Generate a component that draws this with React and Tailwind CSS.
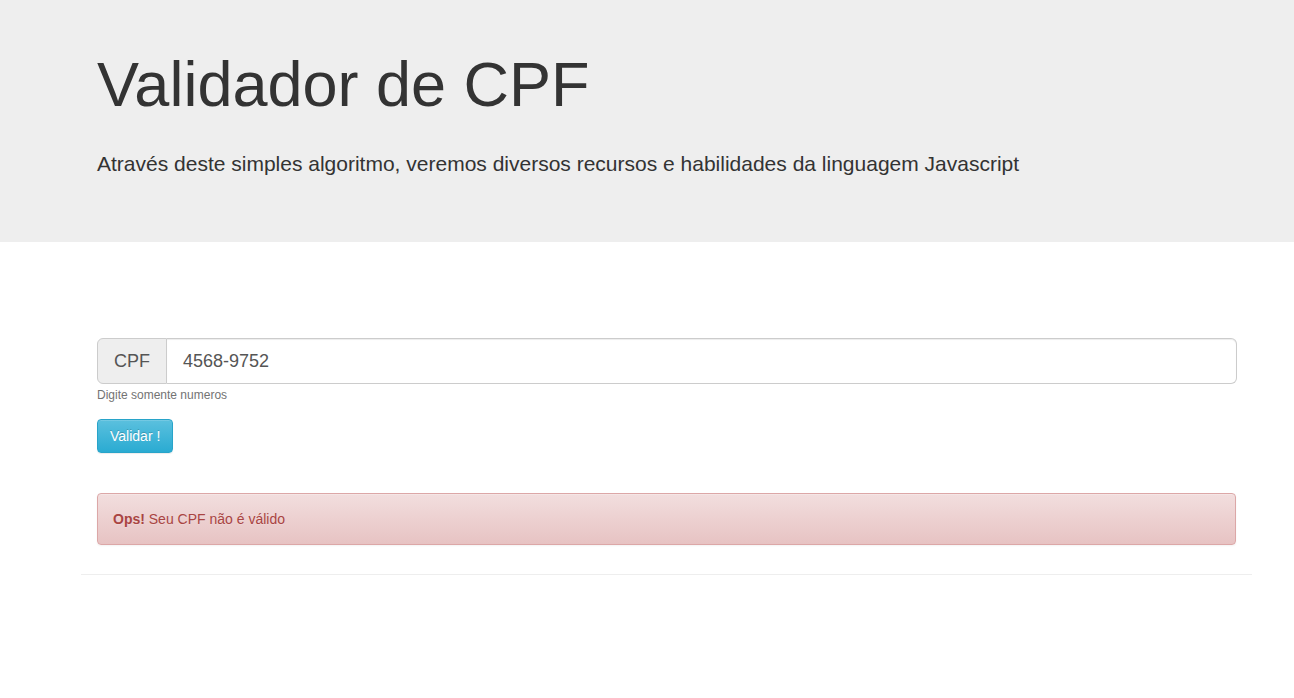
export default function App() {
  const font = { fontFamily: '"Liberation Sans", Arial, Helvetica, sans-serif' };
  return (
    <div style={font} className="min-h-[698px] bg-white text-[#333] text-[14px] leading-[20px]">
      <div className="bg-[#eeeeee] h-[242px]">
        <div className="pl-[97px] pt-[50px]">
          <h1 className="text-[63px] leading-[69px] m-0 font-normal text-[#333]">Validador de CPF</h1>
          <p className="text-[21px] leading-[30px] mt-[30px] text-[#333]">
            Através deste simples algoritmo, veremos diversos recursos e habilidades da linguagem Javascript
          </p>
        </div>
      </div>
      <div className="w-[1171px] ml-[81px]">
        <div className="px-[16px] pt-[96px]">
          <div className="flex h-[46px] w-[1140px]">
            <div className="flex items-center px-[16px] w-[70px] bg-[#eeeeee] border border-[#cccccc] rounded-l-[6px] text-[18px] text-[#555]">
              CPF
            </div>
            <div className="flex-1 flex items-center pl-[16px] border border-l-0 border-[#cccccc] rounded-r-[6px] text-[18px] text-[#555] shadow-[inset_0_1px_1px_rgba(0,0,0,0.075)]">
              4568-9752
            </div>
          </div>
          <div className="mt-[3px] text-[12px] leading-[17px] text-[#737373]">Digite somente numeros</div>
          <button className="mt-[15px] h-[34px] px-[12px] text-[14px] text-white rounded-[4px] border border-[#28a4c9] bg-[linear-gradient(to_bottom,#5bc0de_0%,#2aabd2_100%)] shadow-[inset_0_1px_0_rgba(255,255,255,0.15),0_1px_1px_rgba(0,0,0,0.075)] [text-shadow:0_-1px_0_rgba(0,0,0,0.2)]" style={font}>
            Validar !
          </button>
          <div className="mt-[40px] h-[52px] flex items-center px-[15px] rounded-[4px] border border-[#dca7a7] bg-[linear-gradient(to_bottom,#f2dede_0%,#e7c3c3_100%)] text-[#a94442] shadow-[inset_0_1px_0_rgba(255,255,255,0.25),0_1px_2px_rgba(0,0,0,0.05)] [text-shadow:0_1px_0_rgba(255,255,255,0.2)]">
            <b>Ops!</b>&nbsp;Seu CPF não é válido
          </div>
        </div>
        <hr className="mt-[29px] border-0 border-t border-[#eeeeee]" />
      </div>
    </div>
  );
}
